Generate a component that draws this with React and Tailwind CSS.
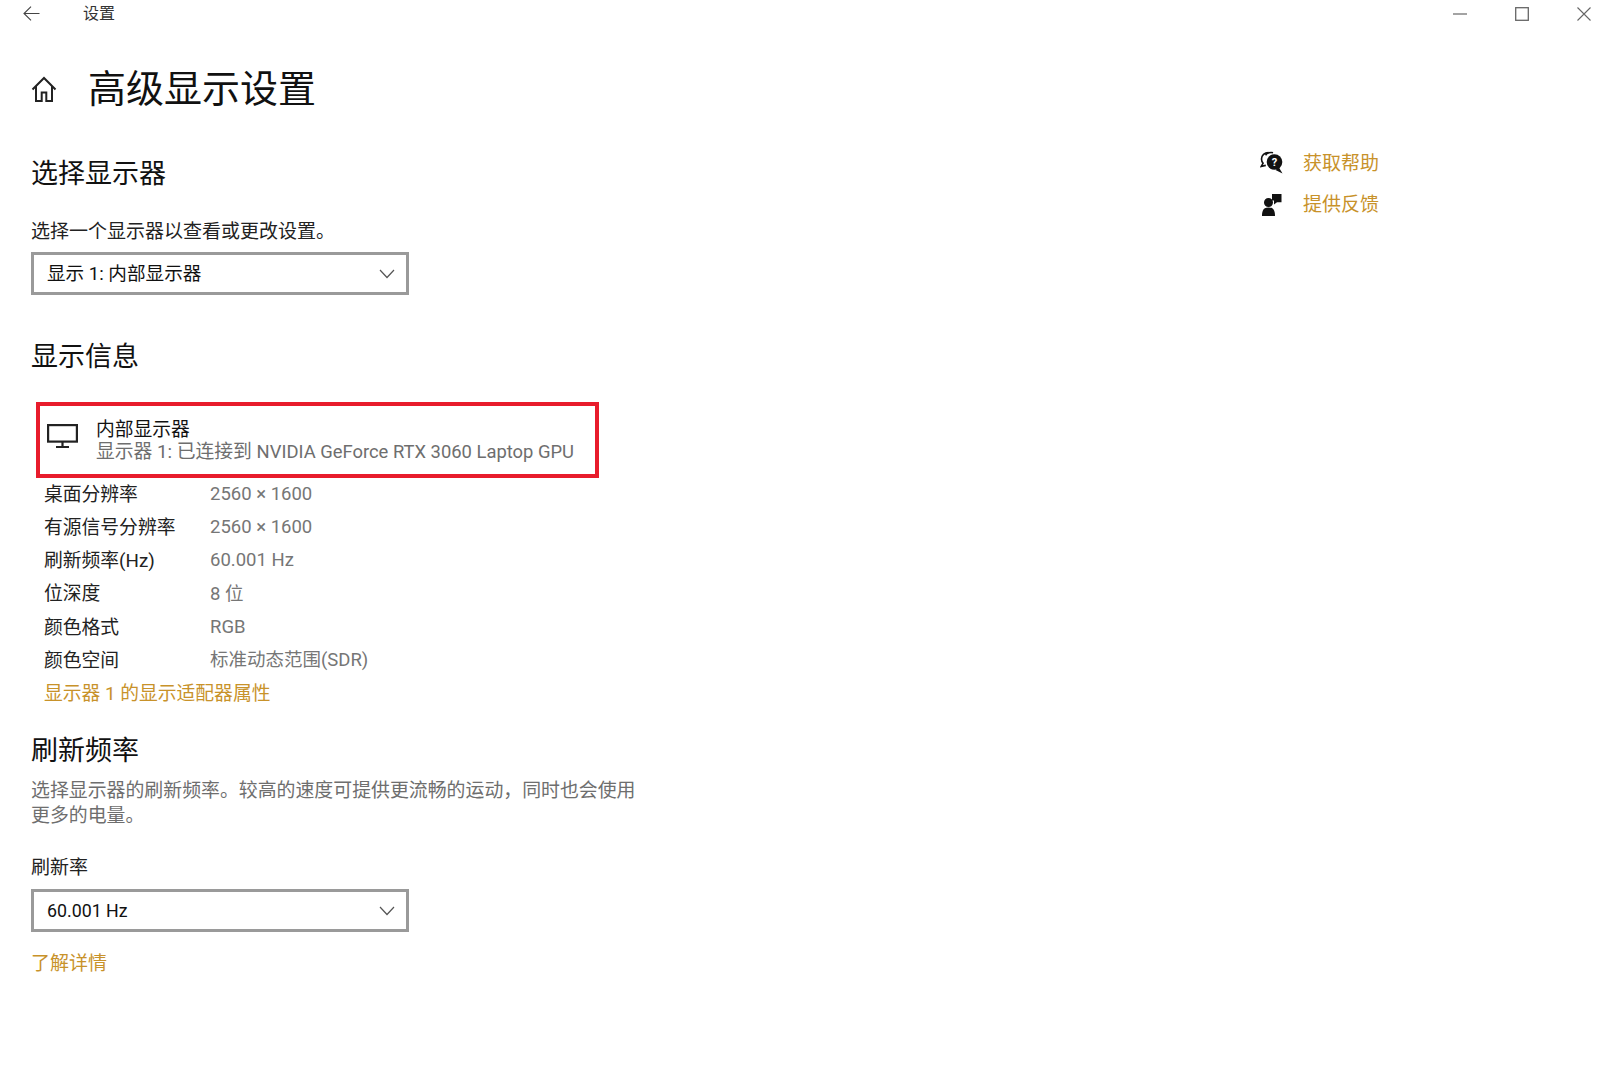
const font = "font-['Roboto','Noto_Sans_CJK_SC',sans-serif]";

const infoRows = [
  ['桌面分辨率', '2560 × 1600'],
  ['有源信号分辨率', '2560 × 1600'],
  ['刷新频率(Hz)', '60.001 Hz'],
  ['位深度', '8 位'],
  ['颜色格式', 'RGB'],
  ['颜色空间', '标准动态范围(SDR)'],
];

function Dropdown({ children }) {
  return (
    <div className="flex h-[43px] w-[378px] items-center justify-between border-[3px] border-[#9a9a9a] pl-[13px] pr-[11px] text-[18.6px] text-[#111]">
      <span className="pt-[3px]">{children}</span>
      <svg width="16" height="10" viewBox="0 0 16 10" fill="none" stroke="#555" strokeWidth="1.2">
        <path d="M1 1l7 7.5L15 1" />
      </svg>
    </div>
  );
}

function SectionTitle({ children }) {
  return <h2 className="flex h-[36px] items-center text-[27px] font-normal text-[#111]">{children}</h2>;
}

export default function App() {
  return (
    <div className={`${font} h-[1085px] w-[1600px] overflow-hidden bg-white`}>
      {/* Title bar */}
      <div className="flex h-[27px] items-center justify-between pl-[23px] pr-[9px]">
        <div className="flex items-center">
          <svg width="17" height="15" viewBox="0 0 17 15" fill="none" stroke="#444" strokeWidth="1.1">
            <path d="M16.5 7.5H1M8 .7L1 7.5l7 6.8" />
          </svg>
          <span className="ml-[43px] text-[16px] text-[#333]">设置</span>
        </div>
        <div className="flex items-center gap-[48px]">
          <svg width="14" height="14" viewBox="0 0 14 14" stroke="#666" strokeWidth="1.2"><path d="M0 7h14" /></svg>
          <svg width="14" height="14" viewBox="0 0 14 14" fill="none" stroke="#666" strokeWidth="1.3"><rect x=".7" y=".7" width="12.6" height="12.6" /></svg>
          <svg width="14" height="14" viewBox="0 0 14 14" stroke="#666" strokeWidth="1.1"><path d="M.5.5l13 13M13.5.5l-13 13" /></svg>
        </div>
      </div>

      <div className="flex">
        {/* Main column */}
        <div className="w-[1260px] pl-[31px]">
          <div className="mt-[37px] flex h-[50px] items-center">
            <svg width="26" height="27" viewBox="0 0 26 27" fill="none" stroke="#222" strokeWidth="2">
              <path d="M1.5 13.5L13 2l11.5 11.5M5 10.5V25h5.7v-8.5h4.6V25H21V10.5" />
            </svg>
            <h1 className="ml-[31px] text-[38px] font-normal text-[#111]">高级显示设置</h1>
          </div>

          <div className="mt-[42px]"><SectionTitle>选择显示器</SectionTitle></div>
          <p className="mt-[27px] flex h-[26px] items-center text-[19px] text-[#222]">选择一个显示器以查看或更改设置。</p>
          <div className="mt-[7px]"><Dropdown>显示 1: 内部显示器</Dropdown></div>

          <div className="mt-[44px]"><SectionTitle>显示信息</SectionTitle></div>

          <div className="ml-[5px] mt-[27px] flex h-[76px] w-[563px] items-center border-4 border-[#e81c2c] pl-[7px]">
            <svg className="mb-[9px]" width="31" height="24" viewBox="0 0 31 24" fill="none" stroke="#222" strokeWidth="2.2">
              <rect x="1.1" y="1.1" width="28.8" height="16.5" />
              <path d="M15.5 18v4.5M9 23h13" />
            </svg>
            <div className="ml-[18px] pt-[2px] leading-[22.5px]">
              <div className="text-[18.8px] text-[#111]">内部显示器</div>
              <div className="text-[18.8px] text-[#6e6e6e]">
                显示器 1: 已连接到 <span className="text-[18.4px]">NVIDIA GeForce RTX 3060 Laptop GPU</span>
              </div>
            </div>
          </div>

          <div className="ml-[13px]">
            {infoRows.map(([label, value]) => (
              <div key={label} className="flex h-[33.3px] items-center text-[18.8px]">
                <span className="w-[166px] text-[#222]">{label}</span>
                <span className="text-[18.5px] text-[#767676]">{value}</span>
              </div>
            ))}
            <div className="flex h-[33.3px] items-center text-[18.8px] text-[#c8922a]">显示器 1 的显示适配器属性</div>
          </div>

          <div className="mt-[22px]"><SectionTitle>刷新频率</SectionTitle></div>
          <p className="mt-[9px] w-[620px] text-[18.9px] leading-[25px] text-[#6e6e6e]">
            选择显示器的刷新频率。较高的速度可提供更流畅的运动，同时也会使用更多的电量。
          </p>
          <p className="mt-[27px] flex h-[26px] items-center text-[19px] text-[#222]">刷新率</p>
          <div className="mt-[8px]"><Dropdown><span className="text-[17.8px]">60.001 Hz</span></Dropdown></div>
          <div className="mt-[19px] flex h-[26px] items-center text-[19px] text-[#c8922a]">了解详情</div>
        </div>

        {/* Help links */}
        <div className="pt-[117px] text-[19px] text-[#c8922a]">
          <div className="flex h-[41px] items-center">
            <svg width="24" height="24" viewBox="0 0 24 24" className="-mt-[3px]">
              <path d="M8.5 1.5C4.6 1.5 1.5 4.3 1.5 8c0 1.6.6 3.1 1.6 4.2L1.3 15.3l4.5-.9" fill="none" stroke="#111" strokeWidth="1.6" />
              <path d="M5.5 4.2C7 2 10.6 .8 13 1.8" fill="none" stroke="#111" strokeWidth="1.6" />
              <circle cx="14.5" cy="11" r="7.8" fill="#111" />
              <path d="M19 16.5l3.5 6-7-3.5z" fill="#111" />
              <text x="14.5" y="15" textAnchor="middle" fontSize="11" fontWeight="700" fill="#fff">?</text>
            </svg>
            <span className="ml-[19px]">获取帮助</span>
          </div>
          <div className="flex h-[41px] items-center">
            <svg width="24" height="24" viewBox="0 0 24 24" fill="#111" className="-mt-[3px]">
              <circle cx="8.5" cy="10.5" r="4.5" />
              <path d="M2 24c0-1 0-3 .8-5.2C3.600 16.500 5.500 15.500 8.500 15.500s4.900 1 5.700 3.300C15 21 15 23 15 24z" />
              <path d="M12 2h9.500v8.200H17L14 12.500V8.500h-2z" />
            </svg>
            <span className="ml-[19px]">提供反馈</span>
          </div>
        </div>
      </div>
    </div>
  );
}
